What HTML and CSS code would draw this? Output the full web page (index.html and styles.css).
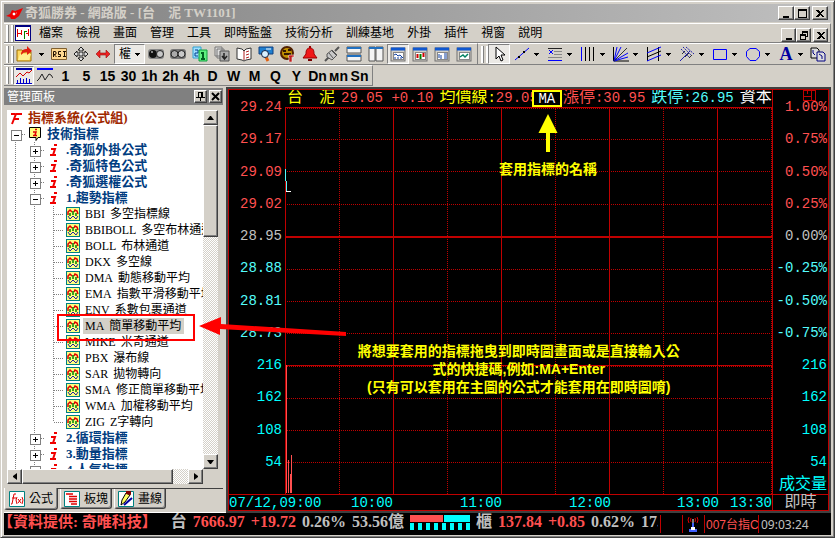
FILE: index.html
```html
<!DOCTYPE html>
<html lang="zh-Hant">
<head>
<meta charset="utf-8">
<title>奇狐勝券 - 網路版</title>
<link rel="stylesheet" href="styles.css">
</head>
<body>
<svg class="defs" aria-hidden="true">
  <symbol id="formula" viewBox="0 0 14 14"><rect x=".5" y=".5" width="13" height="13" fill="#ffff80" stroke="#008080"/><path d="M2 8V5l2-2 2 2M8 5l1-2 2 1 1 3" fill="none" stroke="#e00000" stroke-width="1.500"/><path d="M4 6v3M7 4v4M10 6v3" stroke="#008000" stroke-width="1.500"/><path d="M2 9l2 3 3-3 3 3 2-3" fill="none" stroke="#2020a0"/></symbol>
  <symbol id="info" viewBox="0 0 14 14"><path d="M7 2h3M4 6h4l-2 6M3 12h6" fill="none" stroke="#f00000" stroke-width="2"/></symbol>
  <symbol id="win" viewBox="0 0 16 16"><rect x="1" y="2" width="14" height="13" fill="#d4d0c8" stroke="#707070"/><path d="M1 3h14" stroke="#1058d0" stroke-width="3"/><rect x="3.500" y="6.500" width="10" height="7" fill="#fff" stroke="#888"/></symbol>
  <symbol id="down" viewBox="0 0 5 3"><path d="M0 0h5v1H0zM1 1h3v1H1zM2 2h1v1H2z"/></symbol>
  <symbol id="close" viewBox="0 0 8 7"><path d="M0 0h2l2 2 2-2h2L5 3.500l3 3.500H6L4 5 2 7H0l3-3.500z"/></symbol>
</svg>

<header class="titlebar">
  <svg class="logo" viewBox="0 0 17 11"><path d="M0 8l4-2 2-4 3 1 8-3-2 4-2 4-4 3H5L4 9z" fill="#f00000"/><path d="M7 5h2v2H7zM10 5h1" fill="#fff" stroke="#fff" stroke-width=".5"/></svg>
  <h1>奇狐勝券 - 網路版 - [台　泥 TW1101]</h1>
  <div class="winbtns">
    <button aria-label="最小化"><svg viewBox="0 0 10 9"><path d="M2 7h6v2H2z"/></svg></button>
    <button aria-label="最大化"><svg viewBox="0 0 10 9"><path d="M1 0h9v9H1zM2 2v6h7V2z" fill-rule="evenodd"/></svg></button>
    <button class="apart" aria-label="關閉"><svg viewBox="-1 -1 10 9"><use href="#close" width="8" height="7"/></svg></button>
  </div>
</header>

<div class="menubar">
  <span class="grip"></span>
  <svg class="docicon" viewBox="0 0 16 16"><path d="M0 0h16v16H0z" fill="#000080"/><path d="M1 2h14v13H1z" fill="#fff"/><path d="M2.500 4v8M3 8.500h3M6.500 5v5M13.500 4v7M11 8.500h3" stroke="#e00000" fill="none"/><path d="M9.500 6v8M10 6.500h2" stroke="#008000"/></svg>
  <nav>
    <button>檔案</button><button>檢視</button><button>畫面</button><button>管理</button><button>工具</button><button>即時監盤</button><button>技術分析</button><button>訓練基地</button><button>外掛</button><button>插件</button><button>視窗</button><button>說明</button>
  </nav>
  <div class="winbtns">
    <button aria-label="最小化子視窗"><svg viewBox="0 0 10 9"><path d="M2 7h6v2H2z"/></svg></button>
    <button aria-label="還原子視窗"><svg viewBox="0 0 10 9"><path d="M3 0h6v6H7v3H1V3h2zM4 2v1h3v2h1V2zM2 5v3h4V5z" fill-rule="evenodd"/></svg></button>
    <button class="apart" aria-label="關閉子視窗"><svg viewBox="-1 -1 10 9"><use href="#close" width="8" height="7"/></svg></button>
  </div>
</div>

<div class="toolrow">
  <div class="toolbar main-tools">
    <span class="grip"></span>
    <button class="tool" aria-label="開啟"><svg viewBox="0 0 16 16"><path d="M1 4h5l2 2h7v9H1z" fill="#ffd860" stroke="#a07000"/><path d="M2 14l2-6h11l-2 6z" fill="#fff090"/><path d="M5 9c0-5 3-6 6-6V0l5 5-5 4V6C8 6 7 7 5 9z" fill="#e02010"/></svg></button>
    <button class="drop" aria-label="開啟選項"><svg viewBox="0 0 5 3"><use href="#down"/></svg></button>
    <button class="tool" aria-label="RSI"><svg viewBox="0 0 16 16"><path d="M.5 2.500h15v11H.5z" fill="#ffd890" stroke="#806030"/><path d="M2.500 11V5.500H4L5 6v2L4 8.500H3L5.500 11M10 5.500H7.500v3h2v2H7M12 5.500h3M13.500 5v6M12 10.500h3" fill="none" stroke="#201000"/></svg></button>
    <button class="tool" aria-label="移動"><svg viewBox="0 0 16 16"><path d="M8 1l3 3H9v3h3V5l3 3-3 3V9H9v3h2l-3 3-3-3h2V9H4v2L1 8l3-3v2h3V4H5z" fill="#ddd" stroke="#222"/></svg></button>
    <button class="tool" aria-label="寬度"><svg viewBox="0 0 16 16"><path d="M1 8l4-4v3h6V4l4 4-4 4V9H5v3z" fill="#f02020" stroke="#901010" stroke-width=".6"/></svg></button>
    <button class="right-btn">權<svg viewBox="0 0 5 3"><use href="#down"/></svg></button>
    <button class="tool" aria-label="下一檔"><svg viewBox="0 0 16 16"><rect y="3" width="16" height="10" rx="3" fill="#888"/><circle cx="5" cy="8" r="4" fill="#111"/><circle cx="12" cy="8" r="3.500" fill="#c8c8c8" stroke="#222"/><path d="M3 6h2" stroke="#fff"/></svg></button>
    <button class="tool" aria-label="上一檔"><svg viewBox="0 0 16 16"><rect y="3" width="16" height="10" rx="3" fill="#777"/><circle cx="4.500" cy="8" r="3.500" fill="#aaa" stroke="#222"/><circle cx="11.500" cy="8" r="3.500" fill="#c8c8c8" stroke="#222"/></svg></button>
    <button class="tool" aria-label="翻頁"><svg viewBox="0 0 16 16"><path d="M1 1h8v11H1z" fill="#a0e0ff" stroke="#30a0d0"/><path d="M3 4h3v3H3v3h3" fill="none" stroke="#004090"/><path d="M7 4h8v11H7z" fill="#60f080" stroke="#10a040"/><path d="M9 7h2v6M9 13h4" fill="none" stroke="#006020" stroke-width="2"/></svg></button>
    <button class="tool" aria-label="下載"><svg viewBox="0 0 16 16"><path d="M1 1h7v9H1zM3 3h7v9H3z" fill="#ddd" stroke="#777"/><path d="M6 5h9v10H6z" fill="#aaa" stroke="#555"/><path d="M10 7v5M8 10l2.500 3 2.500-3" fill="none" stroke="#222" stroke-width="1.500"/></svg></button>
    <button class="tool" aria-label="說明書"><svg viewBox="0 0 16 16"><path d="M1 2l5 1 2 2 2-2 5-1v11l-5 1-2 1-2-1-5-1z" fill="#fff" stroke="#333"/><path d="M8 5v9M10 6l3-1M10 9l3-1M10 12l3-1" stroke="#b02020"/></svg></button>
    <button class="tool" aria-label="搜尋"><svg viewBox="0 0 16 16"><path d="M1 1h14v7H1z" fill="#2080d0" stroke="#104080"/><path d="M8 3h5" stroke="#fff"/><path d="M10 15l-2-4" stroke="#e06010" stroke-width="3"/><circle cx="7" cy="8" r="3.500" fill="#d8f0ff" stroke="#124"/></svg></button>
    <button class="tool" aria-label="設定"><svg viewBox="0 0 16 16"><circle cx="7" cy="7" r="6" fill="#c09000" stroke="#502000" stroke-width="2"/><path d="M3 5h3M8 4h3M4 8h7" stroke="#331800" stroke-width="2"/><path d="M9 9h5v2h-2v5h-3v-5H8z" fill="#c02020" stroke="#fff" stroke-width=".5"/></svg></button>
    <button class="tool" aria-label="警示"><svg viewBox="0 0 16 16"><path d="M8 0v2" stroke="#900" stroke-width="2"/><path d="M8 2c4 0 4 4 4 6l3 4H1l3-4c0-2 0-6 4-6z" fill="#f01818" stroke="#900"/><path d="M6 13h4v2H6z" fill="#700"/></svg></button>
    <button class="tool" aria-label="連線"><svg viewBox="0 0 16 16"><path d="M1 15l4-4M11 5l4-4" stroke="#555" stroke-width="2"/><path d="M3 8l5-4 5 5-5 5-5-3z" fill="#c8c8c8" stroke="#555"/><path d="M5 7l4 5M8 5l4 4" stroke="#555"/></svg></button>
    <button class="tool" aria-label="水平分割"><svg viewBox="0 0 16 16"><path d="M1 1h14v6H1zM1 9h14v6H1z" fill="#f4f4f4" stroke="#555"/><path d="M1 2h14M1 10h14" stroke="#2070c0" stroke-width="2"/></svg></button>
    <button class="tool" aria-label="垂直分割"><svg viewBox="0 0 16 16"><path d="M1 1h6v14H1zM8 1h7v14H8z" fill="#f4f4f4" stroke="#555"/><path d="M1 2h14" stroke="#2070c0" stroke-width="2"/></svg></button>
    <button class="tool on" aria-label="即時走勢"><svg viewBox="0 0 16 16"><use href="#win"/><path d="M4 9l2-1 2 2 2-1 3 3M5 13v-2M8 13v-2M11 13v-2" fill="none" stroke="#1040a0"/></svg></button>
    <button class="tool" aria-label="K 線"><svg viewBox="0 0 16 16"><use href="#win"/><path d="M5.500 8v4M11.500 7v4" stroke="#d00000" stroke-width="2"/><path d="M8.500 8v5" stroke="#008000" stroke-width="2"/></svg></button>
    <button class="tool" aria-label="報價"><svg viewBox="0 0 16 16"><use href="#win"/><path d="M5 8v4M7 9v4M10 8h3M10 10h3M10 12h3" stroke="#1040a0"/></svg></button>
    <button class="tool" aria-label="線圖"><svg viewBox="0 0 16 16"><use href="#win"/><path d="M4 11l3-2 2 2 3-3" fill="none" stroke="#008060" stroke-width="1.500"/></svg></button>
  </div>
  <div class="toolbar draw-tools">
    <span class="grip"></span>
    <button class="tool on" aria-label="選取"><svg viewBox="0 0 16 16"><path d="M5 1v12l3-3 2 5 2-1-2-5h4z" fill="#fff" stroke="#000"/></svg></button>
    <button class="tool pair" aria-label="直線"><svg viewBox="0 0 16 16"><path d="M1 14L15 2" stroke="#00f"/><path d="M4 10h2v2H4zM9 5h2v2H9z"/></svg><svg class="dd" viewBox="0 0 5 3"><use href="#down"/></svg></button>
    <button class="tool pair" aria-label="水平線"><svg viewBox="0 0 16 16"><path d="M1 2.500h14" stroke="#222"/><path d="M7 5.500h8M7 8.500h8M1 11.500h14" stroke="#888"/><path d="M2 4l4 4M6 4L2 8M1 14.500h14" stroke="#00f"/></svg><svg class="dd" viewBox="0 0 5 3"><use href="#down"/></svg></button>
    <button class="tool pair" aria-label="垂直線"><svg viewBox="0 0 16 16"><path d="M1.500 1v14" stroke="#00f"/><path d="M5.500 1v14M9.500 1v14M13.500 1v14" stroke="#000"/></svg><svg class="dd" viewBox="0 0 5 3"><use href="#down"/></svg></button>
    <button class="tool pair" aria-label="扇形線"><svg viewBox="0 0 16 16"><path d="M.5 1v14H16" fill="none" stroke="#000"/><path d="M1 15L4 1M1 15L8 1M1 15L15 7M1 15l14-4" stroke="#00f"/><path d="M1 15L14 2" stroke="#333"/></svg><svg class="dd" viewBox="0 0 5 3"><use href="#down"/></svg></button>
    <button class="tool pair" aria-label="通道線"><svg viewBox="0 0 16 16"><path d="M1.500 1v14M12.500 1v14" stroke="#000"/><path d="M1 7l14-6M1 15l14-6" stroke="#00f"/><path d="M1 11l14-6" stroke="#000"/></svg><svg class="dd" viewBox="0 0 5 3"><use href="#down"/></svg></button>
    <button class="tool pair" aria-label="平行線"><svg viewBox="0 0 16 16"><path d="M1 15L11 5" stroke="#22a"/><path d="M2 3l8 8M4 1l8 8M7 1l8 7" stroke="#22a" stroke-dasharray="2 1"/><path d="M6 5l-3 3M10 7l-4 4M13 9l-3 3" stroke="#333"/></svg><svg class="dd" viewBox="0 0 5 3"><use href="#down"/></svg></button>
    <button class="tool pair" aria-label="矩形"><svg viewBox="0 0 16 16"><path d="M1.500 3.500h13v10h-13z" fill="none" stroke="#00f"/></svg><svg class="dd" viewBox="0 0 5 3"><use href="#down"/></svg></button>
    <button class="tool pair" aria-label="圓形"><svg viewBox="0 0 16 16"><path d="M5 2.500h6l3.500 3v5l-3.500 4H5l-3.500-4v-5z" fill="none" stroke="#00f"/></svg><svg class="dd" viewBox="0 0 5 3"><use href="#down"/></svg></button>
    <button class="tool pair" aria-label="文字"><span class="letter">A</span><svg class="dd" viewBox="0 0 5 3"><use href="#down"/></svg></button>
    <button class="tool" aria-label="複製"><svg viewBox="0 0 16 16"><path d="M1 2h6l2 2v8H1z" fill="#ddd" stroke="#000"/><path d="M3 4v3l2 2M7 6h6l2 2v7H7z" fill="#ddd" stroke="#000080"/><path d="M9 8l3 2v3" fill="none" stroke="#000080"/></svg></button>
  </div>
</div>

<div class="toolbar periods">
  <span class="grip"></span>
  <button class="tool on" aria-label="分時圖"><svg viewBox="0 0 16 16"><path d="M0 1h16" stroke="#00a" stroke-width="2"/><path d="M0 9l4-4 3 3 4-4 2 1 3-3" fill="none" stroke="#d00000"/><path d="M1.500 15v-3M4.500 15v-5M7.500 15v-4M10.500 15v-5M13.500 15v-4" stroke="#00c"/><path d="M0 15.500h16" stroke="#00c"/></svg></button>
  <button class="tool" aria-label="走勢線"><svg viewBox="0 0 16 16"><path d="M0 1h16" stroke="#00f" stroke-width="2"/><path d="M0 13l2-2 3-5 3 6 4-6 2 1 2 3" fill="none" stroke="#222"/></svg></button>
  <button>1</button><button>5</button><button>15</button><button>30</button><button>1h</button><button>2h</button><button>4h</button><button>D</button><button>W</button><button>M</button><button>Q</button><button>Y</button><button>Dn</button><button>мn</button><button>Sn</button>
</div>

<main class="workspace">
  <aside class="side">
    <div class="side-head"><h2>管理面板</h2>
      <button aria-label="釘選"><svg viewBox="0 0 9 9"><path d="M2 0h5v5H2zM0 5h9v1H0zM4 6h1v3H4z"/><path d="M3 1h2v4H3z" fill="#d4d0c8"/></svg></button>
      <button aria-label="關閉面板"><svg viewBox="0 0 9 9"><path d="M1 1l7 7M8 1L1 8" stroke="#000" stroke-width="2"/></svg></button>
    </div>
    <div class="side-body">
      <ul class="tree">
        <li class="root"><svg class="ti" viewBox="0 0 14 14"><path d="M3 13L7 3h6M5 8h5M2 3h4" fill="none" stroke="#f00000" stroke-width="2"/></svg>指標系統(公式組)</li>
        <li class="grp"><i class="g box first"></i><svg class="ti" viewBox="0 0 14 14"><path d="M1.500.5h11v10H10l-2 3v-3H1.500z" fill="#ffff80" stroke="#000"/><path d="M7 2.500h2M5 5h3L7 8M5 8.500h4" fill="none" stroke="#e00000" stroke-width="1.500"/></svg>技術指標</li>
        <li class="grp"><i class="g"></i><i class="g box plus"></i><svg class="ti"><use href="#info"/></svg>.奇狐外掛公式</li>
        <li class="grp"><i class="g"></i><i class="g box plus"></i><svg class="ti"><use href="#info"/></svg>.奇狐特色公式</li>
        <li class="grp"><i class="g"></i><i class="g box plus"></i><svg class="ti"><use href="#info"/></svg>.奇狐選權公式</li>
        <li class="grp"><i class="g"></i><i class="g box"></i><svg class="ti"><use href="#info"/></svg>1.趨勢指標</li>
        <li><i class="g"></i><i class="g"></i><i class="g leaf"></i><svg class="ti"><use href="#formula"/></svg><span class="name"><b>BBI</b>多空指標線</span></li>
        <li><i class="g"></i><i class="g"></i><i class="g leaf"></i><svg class="ti"><use href="#formula"/></svg><span class="name"><b>BBIBOLL</b>多空布林通道</span></li>
        <li><i class="g"></i><i class="g"></i><i class="g leaf"></i><svg class="ti"><use href="#formula"/></svg><span class="name"><b>BOLL</b>布林通道</span></li>
        <li><i class="g"></i><i class="g"></i><i class="g leaf"></i><svg class="ti"><use href="#formula"/></svg><span class="name"><b>DKX</b>多空線</span></li>
        <li><i class="g"></i><i class="g"></i><i class="g leaf"></i><svg class="ti"><use href="#formula"/></svg><span class="name"><b>DMA</b>動態移動平均</span></li>
        <li><i class="g"></i><i class="g"></i><i class="g leaf"></i><svg class="ti"><use href="#formula"/></svg><span class="name"><b>EMA</b>指數平滑移動平均</span></li>
        <li><i class="g"></i><i class="g"></i><i class="g leaf"></i><svg class="ti"><use href="#formula"/></svg><span class="name"><b>ENV</b>系數包裹通道</span></li>
        <li class="picked"><i class="g"></i><i class="g"></i><i class="g leaf"></i><svg class="ti"><use href="#formula"/></svg><span class="name"><b>MA</b>簡單移動平均</span></li>
        <li><i class="g"></i><i class="g"></i><i class="g leaf"></i><svg class="ti"><use href="#formula"/></svg><span class="name"><b>MIKE</b>米奇通道</span></li>
        <li><i class="g"></i><i class="g"></i><i class="g leaf"></i><svg class="ti"><use href="#formula"/></svg><span class="name"><b>PBX</b>瀑布線</span></li>
        <li><i class="g"></i><i class="g"></i><i class="g leaf"></i><svg class="ti"><use href="#formula"/></svg><span class="name"><b>SAR</b>拋物轉向</span></li>
        <li><i class="g"></i><i class="g"></i><i class="g leaf"></i><svg class="ti"><use href="#formula"/></svg><span class="name"><b>SMA</b>修正簡單移動平均</span></li>
        <li><i class="g"></i><i class="g"></i><i class="g leaf"></i><svg class="ti"><use href="#formula"/></svg><span class="name"><b>WMA</b>加權移動平均</span></li>
        <li><i class="g"></i><i class="g"></i><i class="g leaf last"></i><svg class="ti"><use href="#formula"/></svg><span class="name"><b>ZIG</b>Z字轉向</span></li>
        <li class="grp"><i class="g"></i><i class="g box plus"></i><svg class="ti"><use href="#info"/></svg>2.循環指標</li>
        <li class="grp"><i class="g"></i><i class="g box plus"></i><svg class="ti"><use href="#info"/></svg>3.動量指標</li>
        <li class="grp"><i class="g"></i><i class="g box plus"></i><svg class="ti"><use href="#info"/></svg>4.人氣指標</li>
      </ul>
      <div class="scroll v"><button aria-label="向上"><svg viewBox="0 0 7 4"><path d="M3 0h1l3 4H0z"/></svg></button><span class="thumb"></span><span class="track"></span><button aria-label="向下"><svg viewBox="0 0 7 4"><path d="M0 0h7L4 4H3z"/></svg></button></div>
      <div class="scroll h"><button aria-label="向左"><svg viewBox="0 0 4 7"><path d="M4 0v7L0 4V3z"/></svg></button><span class="thumb"></span><span class="track"></span><button aria-label="向右"><svg viewBox="0 0 4 7"><path d="M0 0v7l4-3V3z"/></svg></button></div>
    </div>
    <div class="tabs">
      <button class="active"><svg viewBox="0 0 16 16"><path d="M.5.5h15v15H.5z" fill="#fff" stroke="#008080"/><path d="M7 3H5L3 13H2M3 7h4M8 6l-1 3 1 4M9 8l3 4M12 8l-3 4M13 6l1 3-1 4" fill="none" stroke="#e00000"/></svg>公式</button>
      <button><svg viewBox="0 0 16 16"><path d="M.5.5h15v15H.5z" fill="#fff" stroke="#008080"/><path d="M2 3h7M5 5.500h8M5 8h8M5 10.500h8M7 13h6" stroke="#e00000" stroke-width="1.500"/></svg>板塊</button>
      <button><svg viewBox="0 0 16 16"><path d="M.5.5h15v15H.5z" fill="#fff" stroke="#008080"/><path d="M8 2l4 2-5 7-4 3 1-5z" fill="#ffff60" stroke="#000"/><path d="M8 0h5v4L8 3z" fill="#800000"/><path d="M6 14l8-7" stroke="#0000a0" stroke-width="2"/></svg>畫線</button>
    </div>
  </aside>

  <section class="chart">
    <div class="quote">
      <span class="yel cjk">台　泥</span><span class="up">29.05 +0.10</span><span class="avg"><span class="yel"><span class="cjk">均價線</span>:</span><span class="up">29.05</span></span><span class="ma">MA</span><span class="up limit"><span class="cjk">漲停</span>:30.95</span><span class="down"><span class="cjk">跌停</span>:26.95</span><span class="wht cjk">資本額</span>
    </div>
    <div class="corner"><svg viewBox="0 0 13 11"><path d="M.5.5h12v10H.5zM.5 6.500h8M8.500.5v10M4.500.5v3" fill="none" stroke="#c00000"/></svg></div>
    <ul class="axis left">
      <li class="up">29.24</li><li class="up">29.17</li><li class="up">29.09</li><li class="up">29.02</li><li>28.95</li><li class="down">28.88</li><li class="down">28.81</li><li class="down">28.73</li><li class="vol">216</li><li class="vol">162</li><li class="vol">108</li><li class="vol">54</li>
    </ul>
    <div class="plot">
      <div class="lines rows"><i class="edge"></i><i></i><i></i><i></i><i class="base"></i><i></i><i></i><i></i><i class="edge"></i><i></i><i></i><i></i></div>
      <div class="lines cols"><i></i><i></i><i></i><i></i><i></i><i></i><i></i><i></i><i></i></div>
      <svg class="series">
        <path d="M.5 62v12M1.500 74v10" stroke="#54fcfc"/><path d="M1 84.500h5" stroke="#fff"/>
        <svg y="100%" overflow="visible"><path d="M1.500-129V-1M3.500-34V-1M5.500-20V-1M6.500-39V-1" stroke="#ff5050"/></svg>
      </svg>
      <div class="note tip">
        <svg viewBox="0 0 20 38"><path d="M10 0l9.500 19H12v19H8V19H.5z" fill="#ff0"/></svg>
        套用指標的名稱
      </div>
      <div class="note guide">將想要套用的指標拖曳到即時圖畫面或是直接輸入公<br>式的快捷碼,例如:MA+Enter<br>(只有可以套用在主圖的公式才能套用在即時圖唷)</div>
    </div>
    <ul class="axis right">
      <li class="up">1.00%</li><li class="up">0.75%</li><li class="up">0.50%</li><li class="up">0.25%</li><li>0.00%</li><li class="down">-0.25%</li><li class="down">-0.50%</li><li class="down">-0.75%</li><li class="vol">216</li><li class="vol">162</li><li class="vol">108</li><li class="vol">54<span class="unit cjk">成交量</span></li>
    </ul>
    <div class="times"><span>07/12,09:00</span><span>10:00</span><span>11:00</span><span>12:00</span><span>13:00</span><span>13:30</span></div>
    <div class="mode cjk">即時</div>
  </section>
  <svg class="pointer" viewBox="0 0 150 20"><path d="M2 9L24 0v7l125 8v4L23 12v6z" fill="#f00"/></svg>
</main>

<footer class="ticker">
  <div class="feed">
    <span class="up src">【資料提供: 奇唯科技】</span><span>台</span><span class="up">7666.97</span><span class="up">+19.72</span><span>0.26%</span><span>53.56億</span>
    <span class="meter"><i class="bar"></i><i class="ticks"></i></span>
    <span>櫃</span><span class="up">137.84</span><span class="up">+0.85</span><span>0.62%</span><span>17.39億</span>
  </div>
  <div class="cell blank"></div>
  <div class="cell antenna"><svg viewBox="0 0 12 16"><path d="M2 1Q0 4 2 7M10 1q2 3 0 6M4 2Q3 4 4 6M8 2q1 2 0 4" fill="none" stroke="#e00000"/><path d="M6 3v8" stroke="#fff"/><path d="M5 7h2v4H5zM2 13h8v3H2z" fill="#4060ff"/><path d="M4 11h4v3H4z" fill="#fff"/></svg></div>
  <div class="cell code up">007台指C</div>
  <div class="cell clock">09:03:24</div>
</footer>
</body>
</html>
```
FILE: styles.css
```css
* { box-sizing: border-box; }
body, h1, h2, p, ul { margin: 0; padding: 0; font-weight: normal; }
ul { list-style: none; }
body {
  display: flex;
  flex-direction: column;
  height: 100vh;
  padding: 3px 3px 2px;
  overflow: hidden;
  background: #d4d0c8;
  border: 1px solid #d4d0c8;
  border-right-color: #404040;
  border-bottom-color: #404040;
  box-shadow: inset 1px 1px #fff, inset -1px -1px #808080;
  color: #000;
  font: 12px/16px "Liberation Sans", "Noto Sans CJK TC", sans-serif;
}
button {
  display: flex;
  align-items: center;
  justify-content: center;
  margin: 0;
  padding: 0;
  border: 0;
  background: none;
  color: inherit;
  font: inherit;
  flex: none;
}
svg { display: block; flex: none; }
.defs { position: absolute; width: 0; height: 0; }

/* window chrome */
.titlebar {
  display: flex;
  align-items: center;
  flex: none;
  height: 18px;
  padding: 0 3px 0 2px;
  background: linear-gradient(90deg, #808080, #c0c0c0);
}
.logo { width: 17px; height: 11px; margin-right: 2px; }
h1 {
  flex: 1;
  color: #d4d0c8;
  font: bold 13px/18px "Liberation Serif", "Noto Sans CJK TC", serif;
  white-space: pre;
}
.winbtns { display: flex; }
.winbtns button, .side-head button, .scroll button, .thumb {
  background: #d4d0c8;
  border: 1px solid #fff;
  border-right-color: #404040;
  border-bottom-color: #404040;
  box-shadow: inset -1px -1px #808080;
}
.winbtns button { width: 16px; height: 14px; }
.winbtns svg { width: 10px; height: 9px; shape-rendering: crispEdges; }
.winbtns .apart { margin-left: 2px; }
.menubar {
  display: flex;
  align-items: center;
  flex: none;
  height: 20px;
  margin-top: 1px;
  padding-right: 2px;
  border: 1px solid #fff;
  border-width: 1px 1px 1px 0;
  border-right-color: #808080;
  border-bottom-color: #808080;
}
.grip {
  flex: none;
  width: 7px;
  height: 17px;
  margin: 0 0 0 2px;
  border: solid #fff;
  border-width: 0 2px;
  box-shadow: 1px 0 #808080, inset 1px 0 #808080;
}
.docicon { width: 16px; height: 16px; margin: 0 8px 0 2px; shape-rendering: crispEdges; }
nav { display: flex; gap: 13px; flex: 1; }
.menubar .winbtns { align-self: flex-end; }
.menubar .winbtns button { width: 15px; }

/* toolbars */
.toolrow { display: flex; flex: none; height: 22px; }
.toolbar {
  display: flex;
  align-items: center;
  height: 22px;
  border: 1px solid #fff;
  border-width: 1px 1px 1px 0;
  border-right-color: #808080;
  border-bottom-color: #808080;
}
.main-tools { width: 474px; flex: none; }
.draw-tools { flex: 1; padding-left: 1px; }
.tool { width: 22px; height: 20px; }
.tool svg { width: 16px; height: 16px; }
.tool.on, .right-btn {
  background: #ebe9e5;
  border: 1px solid #808080;
  border-right-color: #fff;
  border-bottom-color: #fff;
}
.main-tools .drop { width: 13px; }
.drop svg, .right-btn svg, .tool .dd { width: 5px; height: 3px; shape-rendering: crispEdges; }
.right-btn { width: 31px; height: 20px; gap: 4px; }
.tool.pair { width: 33px; gap: 4px; }
.letter { width: 16px; color: #0000a0; font: bold 18px/18px "Liberation Serif", serif; }
.periods { flex: none; align-self: flex-start; height: 21px; width: 369px; font: bold 14px/18px "Liberation Sans", sans-serif; }
.periods button { width: 21px; }
.periods .tool { height: 19px; }

/* management panel */
.workspace {
  position: relative;
  display: grid;
  grid-template-columns: 219px minmax(0, 1fr);
  gap: 3px;
  flex: 1;
  min-height: 0;
}
.side { display: flex; flex-direction: column; min-height: 0; padding: 2px 0 1px; }
.side-head {
  display: flex;
  align-items: center;
  gap: 2px;
  flex: none;
  height: 17px;
  padding: 0 1px 0 3px;
  background: #808080;
  color: #fff;
}
.side-head h2 { flex: 1; font-size: 12px; }
.side-head button { width: 13px; height: 13px; }
.side-head svg { width: 9px; height: 9px; }
.side-body {
  display: grid;
  grid-template: minmax(0, 1fr) 15px / minmax(0, 1fr) 15px;
  flex: 1;
  min-height: 0;
  padding: 5px 5px 4px 3px;
  border-bottom: 1px solid #404040;
}
.tree { overflow: hidden; background: #fff; }
.tree li {
  position: relative;
  display: flex;
  align-items: center;
  height: 16px;
  white-space: nowrap;
  font-family: "Liberation Serif", "Noto Sans CJK TC", serif;
}
.tree .grp, .tree .root { font-size: 13px; font-weight: bold; color: #003c80; }
.tree .root { color: #a02800; }
.ti { width: 14px; height: 14px; margin: 0 5px 0 2px; }
.name { display: flex; gap: 5px; }
.name b { font-weight: normal; }
.picked .name { padding-right: 3px; background: #d4d0c8; box-shadow: -2px 0 #d4d0c8; }
.picked::after {
  content: "";
  position: absolute;
  left: 50px;
  top: -4px;
  width: 134px;
  height: 23px;
  border: 2px solid #f00;
}
.tree .picked { z-index: 1; }
.g {
  position: relative;
  flex: none;
  width: 19px;
  height: 16px;
  background: repeating-linear-gradient(#808080 0 1px, transparent 1px 2px) 8px 0 / 1px 100% no-repeat;
}
.g.first { background-position: 8px 8px; }
.g.last { background-size: 1px 8px; }
.g.box::before, .leaf::before {
  content: "";
  position: absolute;
  left: 9px;
  right: 0;
  top: 8px;
  height: 1px;
  background: repeating-linear-gradient(90deg, #808080 0 1px, transparent 1px 2px);
}
.g.box::after {
  content: "";
  position: absolute;
  left: 4px;
  top: 4px;
  width: 9px;
  height: 9px;
  border: 1px solid #808080;
  background: linear-gradient(#000, #000) center / 5px 1px no-repeat, #fff;
}
.g.plus::after {
  background: linear-gradient(#000, #000) center / 5px 1px no-repeat, linear-gradient(#000, #000) center / 1px 5px no-repeat, #fff;
}
.scroll { display: flex; background: repeating-conic-gradient(#fff 0 25%, #d4d0c8 0 50%) 0 0 / 2px 2px; }
.scroll.v { flex-direction: column; }
.scroll button { width: 15px; height: 15px; }
.scroll.v svg { width: 7px; height: 4px; }
.scroll.h svg { width: 4px; height: 7px; }
.scroll.v .thumb { flex: 110; }
.scroll.v .track { flex: 218; }
.scroll.h .thumb { flex: 155; }
.scroll.h .track { flex: 16; }
.tabs { display: flex; gap: 2px; flex: none; height: 22px; }
.tabs button {
  gap: 4px;
  height: 20px;
  padding: 0 3px;
  border: 1px solid #fff;
  border-top: 0;
  border-right-color: #404040;
  border-bottom-color: #404040;
  border-radius: 0 0 3px 3px;
  box-shadow: inset -1px -1px #808080;
}
.tabs .active { height: 22px; margin-top: -1px; padding: 0 4px; background: #d4d0c8; }
.tabs svg { width: 16px; height: 16px; }

/* intraday chart */
.chart {
  display: grid;
  grid-template: 17px minmax(0, 1fr) 16px / 56px minmax(0, 1fr) 56px;
  min-width: 0;
  margin: 3px 2px 1px;
  background: #000;
  border: 1px solid #c00000;
  outline: 2px solid #404040;
  color: #c0c0c0;
  font: 14px/16px "Liberation Mono", "Noto Sans CJK TC", monospace;
}
.cjk { font-size: 16px; }
.up { color: #ff5050; }
.down { color: #54fcfc; }
.vol { color: #00ffff; }
.yel { color: #ff0; }
.wht { color: #fff; }
.quote {
  grid-column: 2;
  display: flex;
  gap: 6px;
  padding-left: 2px;
  overflow: hidden;
  white-space: pre;
}
.quote > span { flex: none; }
.quote .avg { margin-right: -12px; }
.quote .ma {
  width: 30px;
  height: 17px;
  border: 2px solid #ff0;
  background: #000;
  color: #fff;
  line-height: 14px;
  text-align: center;
  z-index: 1;
}
.quote .limit { margin-left: -5px; }
.corner { border-left: 1px solid #c00000; }
.corner svg { width: 13px; height: 11px; margin: 0 12px 0 auto; shape-rendering: crispEdges; }
.axis { display: flex; flex-direction: column; margin: -8px 0 8px; text-align: right; }
.axis li { flex: 1 1 0; min-height: 0; }
.axis.left { padding-right: 3px; }
.axis.right { padding-right: 1px; }
.corner, .mode { border-left: 1px solid #c00000; }
.unit { display: block; margin-top: 7px; }
.plot { position: relative; min-width: 0; min-height: 0; border-right: 1px solid #c00000; margin-right: -1px; }
.lines { position: absolute; inset: 0; display: flex; }
.lines i { flex: 1; }
.rows { flex-direction: column; }
.rows i { border-top: 1px dotted #c00000; }
.rows .edge { border-top-style: solid; }
.rows .edge::after { content: ""; display: block; margin-top: 0; border-top: 1px dotted #c00000; }
.rows .base { border-top: 2px solid #c00000; }
.cols { border-right: 1px dotted #c00000; }
.cols i { border-left: 1px dotted #c00000; }
.cols i:nth-child(odd) { border-left-style: solid; }
.cols i:nth-child(2n) { border-left-style: dotted; }
.series { position: absolute; inset: 0; width: 100%; height: 100%; shape-rendering: crispEdges; }
.note { position: absolute; color: #ff0; font: bold 14px/18px "Liberation Sans", "Noto Sans CJK TC", sans-serif; text-align: center; white-space: nowrap; }
.tip { left: 54%; top: 7px; transform: translateX(-50%); }
.tip svg { width: 20px; height: 38px; margin: 0 auto 8px; }
.guide { left: 48%; top: 235px; transform: translateX(-50%); }
.times {
  grid-column: 1 / 3;
  display: grid;
  grid-template-columns: 122fr 109fr 109fr 108fr 53fr 42fr;
  border-top: 1px solid #c00000;
  color: #00ffff;
  white-space: nowrap;
}
.times span { min-width: 0; }
.mode { border-top: 1px solid #c00000; text-align: center; }
.pointer { position: absolute; left: 193px; top: 231px; width: 150px; height: 20px; }

/* status ticker */
.ticker {
  display: flex;
  flex: none;
  height: 23px;
  border-top: 1px solid #fff;
  background: #000;
  color: #c0c0c0;
}
.feed {
  display: flex;
  align-items: center;
  gap: 6px;
  flex: 1;
  min-width: 0;
  padding-bottom: 4px;
  overflow: hidden;
  white-space: nowrap;
  font: bold 16px/18px "Liberation Serif", "Noto Sans CJK TC", serif;
}
.feed span { flex: none; }
.feed .src { margin: 0 8px 0 -6px; font-size: 15px; }
.meter { width: 60px; }
.bar { display: block; height: 7px; background: linear-gradient(90deg, #ff5050 55%, #000 55% 57%, #0ff 57%); }
.ticks { display: block; height: 7px; margin-top: 1px; background: repeating-linear-gradient(90deg, #0ff 0 4px, #000 4px 8px); }
.cell { flex: none; margin: 2px 0; border-left: 1px solid #c00000; line-height: 20px; }
.blank { width: 22px; margin-left: 2px; }
.antenna { width: 22px; padding: 1px 4px; }
.antenna svg { width: 12px; height: 16px; }
.code { width: 54px; padding-left: 1px; overflow: hidden; white-space: nowrap; }
.clock { width: 73px; padding-left: 2px; font-family: "Noto Sans", sans-serif; }
```
